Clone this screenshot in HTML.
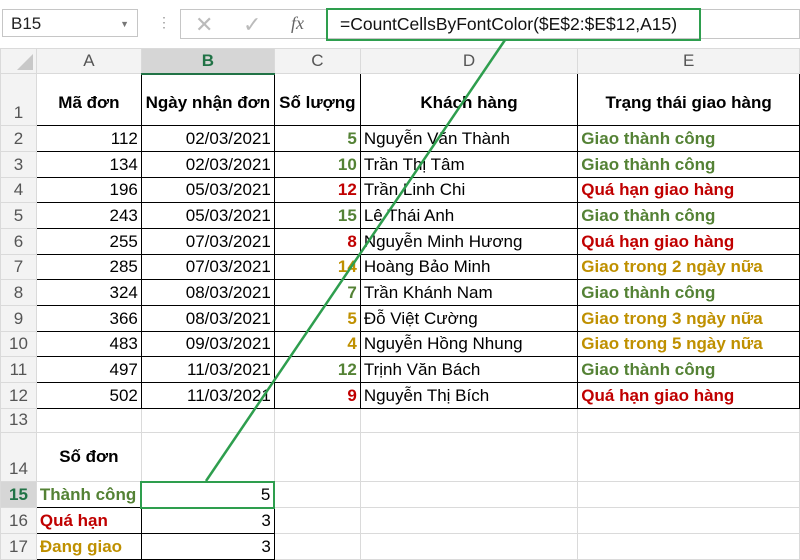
<!DOCTYPE html>
<html><head><meta charset="utf-8"><style>
body{margin:0;width:800px;height:560px;overflow:hidden;background:#fff;font-family:"Liberation Sans",Arial,sans-serif;position:relative}
.top{position:absolute;left:0;top:0;width:800px;height:48px;background:#fff}
.nb{position:absolute;left:2px;top:9px;width:136px;height:28px;border:1px solid #c6c6c6;font-size:17px;line-height:28px;padding-left:8px;box-sizing:border-box;color:#222}
.fb{position:absolute;left:180px;top:9px;width:620px;height:30px;border:1px solid #c6c6c6;box-sizing:border-box}
.fx{position:absolute;left:326px;top:8px;width:375px;height:33px;border:2px solid #2e9e4e;box-sizing:border-box;font-size:17.5px;line-height:29px;padding-left:12px;color:#111}
table{position:absolute;left:0;top:48px;border-collapse:collapse;table-layout:fixed;font-size:17px}
td{border:1px solid #dadada;padding:0 3px;white-space:nowrap;overflow:hidden}
.h{background:#f3f3f3;color:#555;text-align:center;font-size:17px}
.rh{background:#f3f3f3;color:#555;text-align:center;font-size:17px;vertical-align:bottom;padding-bottom:2px}
.sel{background:#d6d6d6;color:#217346;font-weight:bold}
.k{border-color:#000}
.r{text-align:right}.c{text-align:center}.b{font-weight:bold}
.g{color:#548235}.rd{color:#c00000}.y{color:#bf9000}
.hd td.k{vertical-align:bottom;padding-bottom:12px;font-weight:bold;text-align:center}
</style></head><body>
<div class="top">
<div class="nb">B15<span style="position:absolute;right:8px;top:0;font-size:9px;color:#777">▼</span></div>
<div style="position:absolute;left:157px;top:14px;color:#999;font-size:14px">⋮</div>
<div class="fb">
<span style="position:absolute;left:14px;top:2px;font-size:22px;color:#bbb">✕</span>
<span style="position:absolute;left:62px;top:2px;font-size:22px;color:#bbb">✓</span>
<span style="position:absolute;left:110px;top:3px;font-size:18px;color:#666;font-style:italic;font-family:'Liberation Serif',serif">fx</span>
</div>
<div class="fx">=CountCellsByFontColor($E$2:$E$12,A15)</div>
</div>
<table>
<colgroup><col style="width:36px"><col style="width:105px"><col style="width:133px"><col style="width:86px"><col style="width:218px"><col style="width:222px"></colgroup>
<tr style="height:25px"><td class="h" style="position:relative"><span style="position:absolute;right:3px;bottom:3px;width:0;height:0;border-left:16px solid transparent;border-bottom:16px solid #c8c8c8"></span></td><td class="h">A</td><td class="h sel" style="border-bottom:2px solid #217346">B</td><td class="h">C</td><td class="h">D</td><td class="h">E</td></tr>
<tr class="hd" style="height:52px"><td class="rh">1</td><td class="k">Mã đơn</td><td class="k">Ngày nhận đơn</td><td class="k">Số lượng</td><td class="k">Khách hàng</td><td class="k">Trạng thái giao hàng</td></tr>
<tr style="height:26px"><td class="rh">2</td><td class="k r">112</td><td class="k r">02/03/2021</td><td class="k r b g">5</td><td class="k">Nguyễn Văn Thành</td><td class="k b g">Giao thành công</td></tr>
<tr style="height:26px"><td class="rh">3</td><td class="k r">134</td><td class="k r">02/03/2021</td><td class="k r b g">10</td><td class="k">Trần Thị Tâm</td><td class="k b g">Giao thành công</td></tr>
<tr style="height:25px"><td class="rh">4</td><td class="k r">196</td><td class="k r">05/03/2021</td><td class="k r b rd">12</td><td class="k">Trần Linh Chi</td><td class="k b rd">Quá hạn giao hàng</td></tr>
<tr style="height:26px"><td class="rh">5</td><td class="k r">243</td><td class="k r">05/03/2021</td><td class="k r b g">15</td><td class="k">Lê Thái Anh</td><td class="k b g">Giao thành công</td></tr>
<tr style="height:26px"><td class="rh">6</td><td class="k r">255</td><td class="k r">07/03/2021</td><td class="k r b rd">8</td><td class="k">Nguyễn Minh Hương</td><td class="k b rd">Quá hạn giao hàng</td></tr>
<tr style="height:25px"><td class="rh">7</td><td class="k r">285</td><td class="k r">07/03/2021</td><td class="k r b y">14</td><td class="k">Hoàng Bảo Minh</td><td class="k b y">Giao trong 2 ngày nữa</td></tr>
<tr style="height:26px"><td class="rh">8</td><td class="k r">324</td><td class="k r">08/03/2021</td><td class="k r b g">7</td><td class="k">Trần Khánh Nam</td><td class="k b g">Giao thành công</td></tr>
<tr style="height:26px"><td class="rh">9</td><td class="k r">366</td><td class="k r">08/03/2021</td><td class="k r b y">5</td><td class="k">Đỗ Việt Cường</td><td class="k b y">Giao trong 3 ngày nữa</td></tr>
<tr style="height:25px"><td class="rh">10</td><td class="k r">483</td><td class="k r">09/03/2021</td><td class="k r b y">4</td><td class="k">Nguyễn Hồng Nhung</td><td class="k b y">Giao trong 5 ngày nữa</td></tr>
<tr style="height:26px"><td class="rh">11</td><td class="k r">497</td><td class="k r">11/03/2021</td><td class="k r b g">12</td><td class="k">Trịnh Văn Bách</td><td class="k b g">Giao thành công</td></tr>
<tr style="height:26px"><td class="rh">12</td><td class="k r">502</td><td class="k r">11/03/2021</td><td class="k r b rd">9</td><td class="k">Nguyễn Thị Bích</td><td class="k b rd">Quá hạn giao hàng</td></tr>
<tr style="height:24px"><td class="rh">13</td><td></td><td></td><td></td><td></td><td></td></tr>
<tr style="height:49px"><td class="rh">14</td><td class="b c" style="vertical-align:middle">Số đơn</td><td></td><td></td><td></td><td></td></tr>
<tr style="height:26px"><td class="rh sel" style="color:#217346">15</td><td class="k b g">Thành công</td><td class="k r" style="border:2px solid #2e9e4e">5</td><td></td><td></td><td></td></tr>
<tr style="height:26px"><td class="rh">16</td><td class="k b rd">Quá hạn</td><td class="k r">3</td><td></td><td></td><td></td></tr>
<tr style="height:26px"><td class="rh">17</td><td class="k b y">Đang giao</td><td class="k r">3</td><td></td><td></td><td></td></tr>
</table>
<svg style="position:absolute;left:0;top:0" width="800" height="560"><line x1="505" y1="40" x2="206" y2="481" stroke="#2e9e4e" stroke-width="2.5"/></svg>
</body></html>
